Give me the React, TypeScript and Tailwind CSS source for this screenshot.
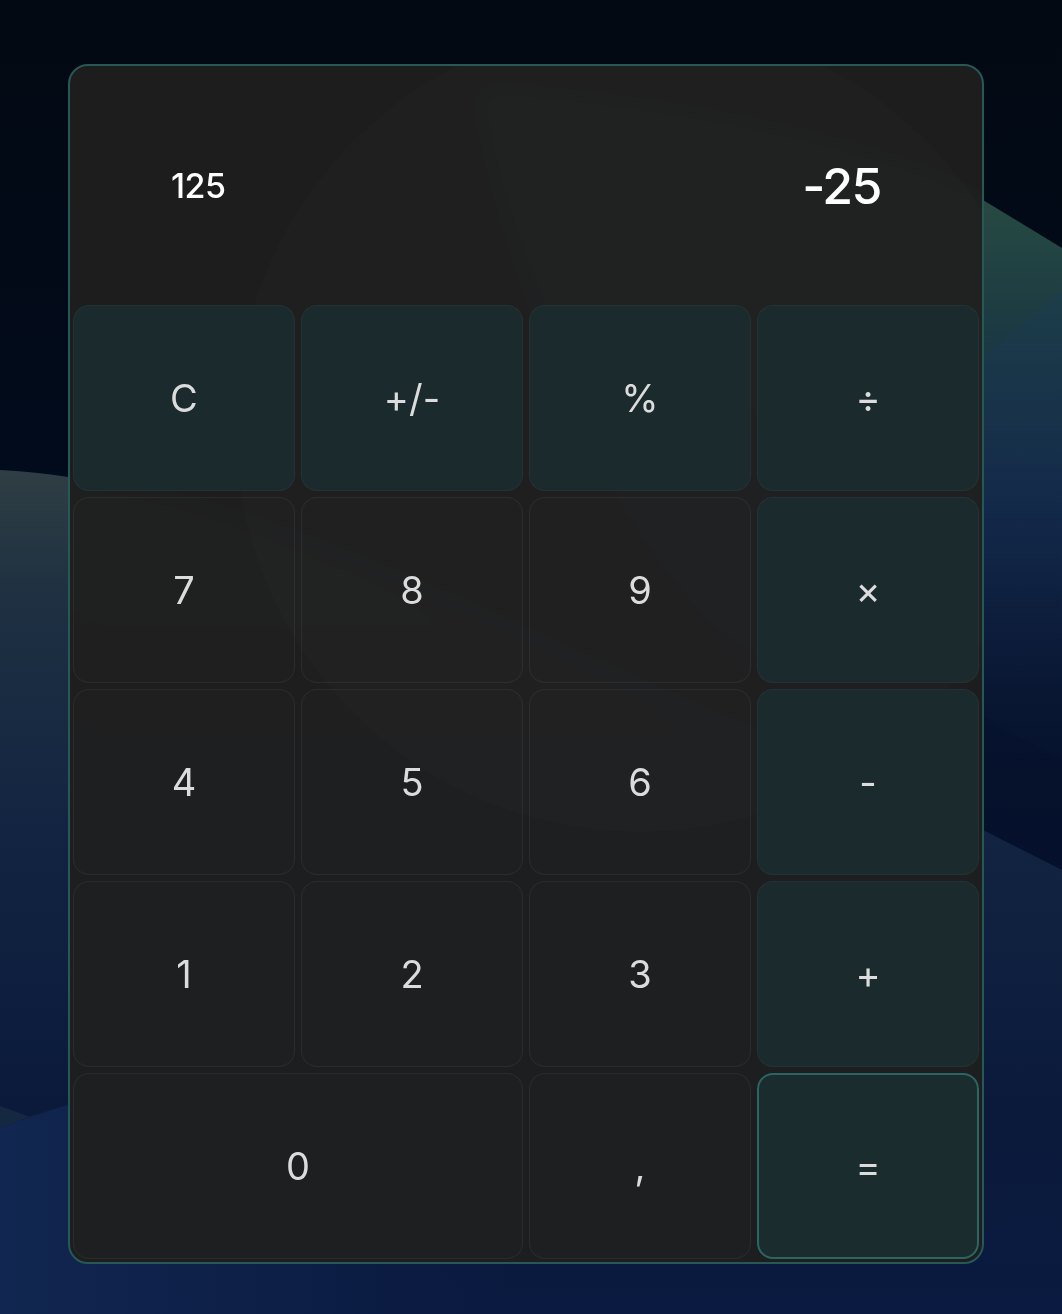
import React from "react";

type Key = { label: string; kind: "num" | "op" | "eq"; span?: number };

const keys: Key[] = [
  { label: "C", kind: "op" },
  { label: "+/-", kind: "op" },
  { label: "%", kind: "op" },
  { label: "÷", kind: "op" },
  { label: "7", kind: "num" },
  { label: "8", kind: "num" },
  { label: "9", kind: "num" },
  { label: "×", kind: "op" },
  { label: "4", kind: "num" },
  { label: "5", kind: "num" },
  { label: "6", kind: "num" },
  { label: "-", kind: "op" },
  { label: "1", kind: "num" },
  { label: "2", kind: "num" },
  { label: "3", kind: "num" },
  { label: "+", kind: "op" },
  { label: "0", kind: "num", span: 2 },
  { label: ",", kind: "num" },
  { label: "=", kind: "eq" },
];

function Background() {
  return (
    <svg
      className="absolute inset-0 w-full h-full"
      viewBox="0 0 1062 1314"
      preserveAspectRatio="none"
    >
      <defs>
        <linearGradient id="base" x1="0" y1="0" x2="0" y2="1">
          <stop offset="0" stopColor="#020912" />
          <stop offset="0.35" stopColor="#020b1c" />
          <stop offset="0.65" stopColor="#05112c" />
          <stop offset="1" stopColor="#0a183e" />
        </linearGradient>
        <linearGradient id="rightGreen" gradientUnits="userSpaceOnUse" x1="0" y1="190" x2="0" y2="860">
          <stop offset="0" stopColor="#274b43" />
          <stop offset="0.18" stopColor="#1d3c42" />
          <stop offset="0.5" stopColor="#112446" />
          <stop offset="1" stopColor="#061230" stopOpacity="0" />
        </linearGradient>
        <linearGradient id="rightBlue" gradientUnits="userSpaceOnUse" x1="0" y1="290" x2="0" y2="800">
          <stop offset="0" stopColor="#1c3d4a" stopOpacity="0.9" />
          <stop offset="0.4" stopColor="#142c4c" stopOpacity="0.6" />
          <stop offset="1" stopColor="#0a1838" stopOpacity="0" />
        </linearGradient>
        <linearGradient id="leftWave" gradientUnits="userSpaceOnUse" x1="0" y1="470" x2="0" y2="1314">
          <stop offset="0" stopColor="#2f3e44" />
          <stop offset="0.15" stopColor="#1e3041" />
          <stop offset="0.45" stopColor="#122342" />
          <stop offset="0.75" stopColor="#0b1a3a" />
          <stop offset="1" stopColor="#0a1a40" />
        </linearGradient>
        <linearGradient id="lowLeft" gradientUnits="userSpaceOnUse" x1="0" y1="0" x2="520" y2="0">
          <stop offset="0" stopColor="#112650" />
          <stop offset="0.6" stopColor="#0e214a" stopOpacity="0.6" />
          <stop offset="1" stopColor="#0b1a44" stopOpacity="0" />
        </linearGradient>
      </defs>
      <rect x="0" y="0" width="1062" height="1314" fill="url(#base)" />
      <path
        d="M480 90 C 720 110 880 150 983 200 L 1062 248 L 1062 900 C 800 820 560 520 480 90 Z"
        fill="url(#rightGreen)"
      />
      <path
        d="M1062 292 L 983 357 L 760 560 C 880 650 980 720 1062 760 Z"
        fill="url(#rightBlue)"
      />
      <path
        d="M0 470 C 150 478 320 540 520 630 C 700 712 850 775 983 830 L 1062 870 L 1062 1314 L 0 1314 Z"
        fill="url(#leftWave)"
      />
      <path
        d="M0 1128 C 100 1090 300 1040 520 1000 L 520 1314 L 0 1314 Z"
        fill="url(#lowLeft)"
      />
      <path d="M0 1106 L 30 1117 L 68 1102 L 0 1128 Z" fill="#1a3346" opacity="0.6" />
    </svg>
  );
}

export default function App() {
  return (
    <div
      className="relative w-full h-[1314px] overflow-hidden bg-[#020912]"
      style={{ fontFamily: "Inter, 'Noto Sans', sans-serif" }}
    >
      <Background />
      <div className="relative pt-[64px] pl-[68px]">
        <div className="relative w-[916px] h-[1200px] rounded-[20px] border-2 border-[#275856] bg-[#1e1e1e]/[0.96] backdrop-blur-md p-[3px] overflow-hidden flex flex-col">
          <div className="absolute left-[165px] top-[-44px] w-[810px] h-[810px] rounded-full bg-white/[0.012] pointer-events-none" />
          <div className="relative h-[236px] flex items-center justify-between px-[98px] pb-[2px]">
            <span className="text-[34px] font-medium text-white tracking-[-0.5px] leading-none">125</span>
            <span className="text-[50px] font-medium text-white tracking-[-1.5px] leading-none">-25</span>
          </div>
          <div className="relative grid grid-cols-4 auto-rows-[186px] gap-[6px]">
            {keys.map((k) => {
              const base =
                "flex items-center justify-center rounded-[16px] text-[38px] text-[#dcdcdc] leading-none";
              let cls = "";
              if (k.kind === "num") cls = "border border-white/[0.05] bg-white/[0.008]";
              else if (k.kind === "op") cls = "border border-white/[0.04] bg-[#1b2d30]/[0.85]";
              else cls = "border-2 border-[#2c6663] bg-[#1b2c2e]";
              return (
                <div
                  key={k.label}
                  className={`${base} ${cls} ${k.span === 2 ? "col-span-2" : ""}`}
                >
                  {k.label}
                </div>
              );
            })}
          </div>
        </div>
      </div>
    </div>
  );
}
